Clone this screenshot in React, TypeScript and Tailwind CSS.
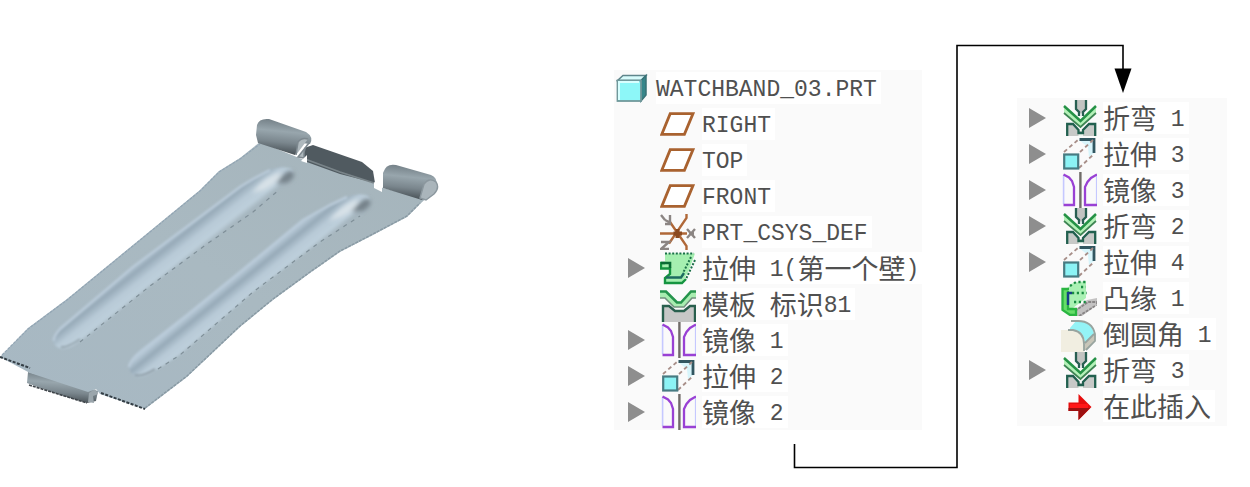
import React from "react";

type IconName =
  | "plane"
  | "csys"
  | "wall"
  | "mold"
  | "mirror"
  | "extrude"
  | "bend"
  | "flange"
  | "round"
  | "insert";

type Feature = { label: string; icon: IconName; expandable?: boolean };

const leftFeatures: Feature[] = [
  { label: "RIGHT", icon: "plane" },
  { label: "TOP", icon: "plane" },
  { label: "FRONT", icon: "plane" },
  { label: "PRT_CSYS_DEF", icon: "csys" },
  { label: "拉伸 1(第一个壁)", icon: "wall", expandable: true },
  { label: "模板 标识81", icon: "mold" },
  { label: "镜像 1", icon: "mirror", expandable: true },
  { label: "拉伸 2", icon: "extrude", expandable: true },
  { label: "镜像 2", icon: "mirror", expandable: true },
];

const rightFeatures: Feature[] = [
  { label: "折弯 1", icon: "bend", expandable: true },
  { label: "拉伸 3", icon: "extrude", expandable: true },
  { label: "镜像 3", icon: "mirror", expandable: true },
  { label: "折弯 2", icon: "bend", expandable: true },
  { label: "拉伸 4", icon: "extrude", expandable: true },
  { label: "凸缘 1", icon: "flange" },
  { label: "倒圆角 1", icon: "round" },
  { label: "折弯 3", icon: "bend", expandable: true },
  { label: "在此插入", icon: "insert" },
];

const drawings: Record<IconName, React.ReactNode> = {
  plane: (
    <path d="M1.8 28.3 10.2 7.6H33L24.4 28.3Z" fill="#fff" stroke="#a9622f" strokeWidth="2.8" />
  ),
  csys: (
    <g fill="none" strokeWidth="2.4">
      <path d="M0 19.5H27M26.5 0V4L9 29.5M10 8 26.5 32V36" stroke="#b06838" />
      <path d="M13.5 19.5H22M17.5 15V24" stroke="#8c4a20" strokeWidth="4" />
      <g stroke="#8b8583" strokeWidth="2.4">
        <path d="M1 1 5 6M10 1V10H5M5 6 9 8" />
        <path d="M27 15 35 24M35 15 27 24M29 19.5H34" />
        <path d="M1 28H9L1 35H9" />
      </g>
    </g>
  ),
  wall: (
    <g>
      <path d="M5 3.5H35L29 20 22 33H5V27L10 23V18.5H0V13H5Z" fill="#a5efb0" />
      <path d="M5 13H1V18.5H10V24L5 28V33H22L26 29" fill="none" stroke="#159440" strokeWidth="2.4" />
      <path d="M1 13H10V18" fill="none" stroke="#0b6b35" strokeWidth="2.6" />
      <path d="M6 27.5H21L24 23" fill="none" stroke="#1d6b60" strokeWidth="2.4" />
      <path d="M5 3.5H34M31 7 23 23M35 10 26 29" fill="none" stroke="#1a7048" strokeWidth="2" strokeDasharray="2 1.6" />
    </g>
  ),
  mold: (
    <g>
      <path d="M3 19H9L15 25H24L30 19H35V36H3Z" fill="#c6c7c6" />
      <path d="M3 36V20H9L15 25H24L30 20H35V36" fill="none" stroke="#285f4d" strokeWidth="2.4" />
      <path d="M0 5H6L17 16H21L31 5H36V12H32L23 21H14L5 12H0Z" fill="#a8edb0" />
      <path d="M0 5.5H6L17 16.5H21L31 5.5H36" fill="none" stroke="#25944c" strokeWidth="2.6" />
      <path d="M0 12H5L14 21H24L32 12H36" fill="none" stroke="#71917e" strokeWidth="1.6" />
    </g>
  ),
  mirror: (
    <g fill="none">
      <path d="M2.6 3V32M35.7 3V32" stroke="#c5c8ff" strokeWidth="1.6" />
      <path d="M2.5 2.5 8 5.5 11 9 13 15V33H2.5M36 2.5 30 6 26.5 10 24 15V33H36" stroke="#9941d4" strokeWidth="2.3" />
      <path d="M19.4 0V36" stroke="#706c68" strokeWidth="2.4" />
    </g>
  ),
  extrude: (
    <g>
      <path d="M18 4H33V17L28 21 27 11Z" fill="#d8f5fb" />
      <path d="M18.5 3.5H33V17" fill="none" stroke="#315660" strokeWidth="2.8" />
      <path d="M3 16 18 3M19 16 32 4M18 32 33 18" stroke="#a78e88" strokeWidth="1.8" strokeDasharray="4 3" />
      <rect x="3.2" y="18.5" width="14" height="14" fill="#8cf3f5" stroke="#477b82" strokeWidth="2.2" />
    </g>
  ),
  bend: (
    <g>
      <path d="M6 36V24H12L19 31 21 31 28 24H34V36Z" fill="#c7c9c7" />
      <path d="M17.500 36V32H22V36Z" fill="#eef6ef" />
      <path d="M6.2 36V24H12L17.5 30V33H22V30L28 24H34.2V36" fill="none" stroke="#22604f" strokeWidth="2.3" />
      <path d="M15 0H25V8L20 14 15 8Z" fill="#c2c4c2" />
      <path d="M15 0V9L18 12V16M25 0V9L22 12V16" fill="none" stroke="#285f52" strokeWidth="2.3" />
      <path d="M3 6 19.5 21 35 6V13L19.5 27 3 13Z" fill="#b4f1b8" />
      <path d="M3 6 19.5 21 35 6" fill="none" stroke="#259246" strokeWidth="2.5" />
      <path d="M3 13 19.5 27 35 13" fill="none" stroke="#3f8554" strokeWidth="1.7" />
    </g>
  ),
  flange: (
    <g>
      <path d="M13 31 26 20 36 18V25L21 36H13Z" fill="#c3c2c2" />
      <path d="M14 31 27 22H36V26M18 36 34 26" fill="none" stroke="#888586" strokeWidth="1.8" strokeDasharray="3 1" />
      <path d="M5 9 12 3 25 1V18L12 28V34L6 32Z" fill="#aaf1b4" />
      <path d="M9 6 15 2H25M11 13H26M13 22H25M20 7H25" fill="none" stroke="#198c42" strokeWidth="2.3" strokeDasharray="2.2 2.6" />
      <path d="M8 9H1.5V30L9 35H15V29H7V11" fill="#66dd68" stroke="#2ab541" strokeWidth="2.3" />
      <path d="M7 12V25M7 13H11" stroke="#173f86" strokeWidth="2.4" />
    </g>
  ),
  round: (
    <g>
      <path d="M0 14H13Q23 17 23 28V36H0Z" fill="#f1eee1" />
      <path d="M23 28 34 18V24L25 34H23Z" fill="#c8c6b9" />
      <path d="M9 12 15 5Q30 4 33 18L24 27Q23 13 9 14Z" fill="#94f3f6" />
      <path d="M7 14H12Q23 16 23 28V35M10 5H17Q31 5 34 18V25L25 34M24 27 33 18" fill="none" stroke="#98a49f" strokeWidth="1.8" />
    </g>
  ),
  insert: (
    <g>
      <path d="M7.5 14.5H17.5V6L30.5 19 17.5 32V23H7.5Z" fill="#e60d0d" />
      <path d="M7.5 20H29L17.5 32V23H7.5Z" fill="#9c1010" />
      <path d="M9 18H27" stroke="#ff1717" strokeWidth="4" />
    </g>
  ),
};

function FeatureIcon({ name }: { name: IconName }) {
  return (
    <svg viewBox="0 0 36 36" className="h-9 w-9 shrink-0" aria-hidden="true">
      {drawings[name]}
    </svg>
  );
}

/* Han characters are set larger than the Latin ones beside them. */
function Label({ text }: { text: string }) {
  const parts = text.match(/[\u4e00-\u9fff]+|[^\u4e00-\u9fff]+/g) ?? [];
  return (
    <span className="flex h-8 items-center bg-white pr-1 whitespace-pre text-[#505050]">
      {parts.map((part, i) =>
        /[\u4e00-\u9fff]/.test(part) ? (
          <span key={i} className="font-['Noto_Sans_CJK_SC',sans-serif] text-[27px] leading-8">
            {part}
          </span>
        ) : (
          <span key={i} className="pt-1 font-['Liberation_Mono',monospace] text-[23px] leading-8">
            {part}
          </span>
        ),
      )}
    </span>
  );
}

function FeatureRow({ feature }: { feature: Feature }) {
  return (
    <li className="flex h-9 items-center">
      <span className="flex w-11 shrink-0 pl-3">
        {feature.expandable && (
          <button type="button" aria-label={`展开 ${feature.label}`}>
            <svg viewBox="0 0 17 22" className="h-[22px] w-[17px]" aria-hidden="true">
              <path d="M0 1 17 11 0 21Z" fill="#8e8e8e" />
            </svg>
          </button>
        )}
      </span>
      <FeatureIcon name={feature.icon} />
      <span className="pl-1.5">
        <Label text={feature.label} />
      </span>
    </li>
  );
}

function Connector() {
  return (
    <svg
      viewBox="0 0 613 430"
      className="pointer-events-none col-start-1 row-start-1 h-[430px] w-[613px]"
      aria-hidden="true"
    >
      <path d="M180.5 404V427.5H343V5.5H509V32" fill="none" stroke="#000" strokeWidth="1.6" />
      <path d="M500.5 28.5H517.5L509 53Z" fill="#000" />
    </svg>
  );
}

function Watchband() {
  return (
    <svg viewBox="0 0 440 310" className="h-[310px] w-[440px]" role="img" aria-label="WATCHBAND_03">
      <defs>
        <linearGradient id="tube" gradientUnits="objectBoundingBox" x1="0.55" y1="0" x2="0.4" y2="1">
          <stop offset="0" stopColor="#6f7b82" />
          <stop offset="0.35" stopColor="#98a6ad" />
          <stop offset="0.65" stopColor="#7a868d" />
          <stop offset="1" stopColor="#41494e" />
        </linearGradient>
        <linearGradient id="body" x1="0" y1="1" x2="1" y2="0">
          <stop offset="0" stopColor="#a7b8c3" />
          <stop offset="0.5" stopColor="#a9b9c1" />
          <stop offset="1" stopColor="#a5b4bb" />
        </linearGradient>
        <linearGradient id="grooveA" gradientUnits="userSpaceOnUse" x1="145" y1="255" x2="164" y2="279">
          <stop offset="0" stopColor="#b8cad8" />
          <stop offset="0.25" stopColor="#97aab8" />
          <stop offset="0.55" stopColor="#b8cad7" />
          <stop offset="0.82" stopColor="#bdcfdb" />
          <stop offset="1" stopColor="#a6b6bf" />
        </linearGradient>
        <linearGradient id="grooveB" gradientUnits="userSpaceOnUse" x1="235" y1="277" x2="253" y2="299">
          <stop offset="0" stopColor="#b8cad8" />
          <stop offset="0.25" stopColor="#97aab8" />
          <stop offset="0.55" stopColor="#b8cad7" />
          <stop offset="0.82" stopColor="#bdcfdb" />
          <stop offset="1" stopColor="#a6b6bf" />
        </linearGradient>
        <filter id="soft" x="-5%" y="-5%" width="110%" height="110%">
          <feGaussianBlur stdDeviation="1.2" />
        </filter>
        <filter id="softer" x="-10%" y="-10%" width="120%" height="120%">
          <feGaussianBlur stdDeviation="2.2" />
        </filter>
      </defs>
      <g transform="translate(0 -110)">
        <path d="M28 372 27 383Q55 394 87 403L96 401 98 391Z" fill="url(#tube)" />
        <path d="M29 385 87 403" fill="none" stroke="#3f454a" strokeWidth="1.6" strokeDasharray="3 1" />
        <path d="M88 402 89 393 95 389 98 394 93 396 94 403Z" fill="#9ba6ac" />
        <path d="M0 357 28 328 67 299 150 231 200 190 219 171 240 158 260 142 304 160 373 183 383 188 418 197 434 191 420 204 407 217 373 235 340 252 310 273 273 300 240 327 187 377 145 409 100 394 96 389 88 392 30 373Z" fill="url(#body)" />
        <path d="M0 357 30 368M101 393 145 409" fill="none" stroke="#333d44" strokeWidth="2" strokeDasharray="3 1.5" />
        <path d="M145 408 187 376 240 326 273 299 310 272 340 251 373 234 407 216 420 203" fill="none" stroke="#899aa4" strokeWidth="1.5" strokeDasharray="3 1" />
        <path d="M2 355 28 329 67 300 150 232 200 191 219 172 240 159 260 144" fill="none" stroke="#92a5b4" strokeWidth="1.2" strokeDasharray="3 1" />
        <g filter="url(#soft)">
          <path d="M53 342Q52 337 60 329L133 267 240 187 253 179 269 170Q284 165 292 169 297 174 290 181L280 189 253 212 207 244 150 286 87 337 73 346Q58 353 53 342Z" fill="url(#grooveA)" />
          <path d="M129 367Q130 360 141 351L187 315 240 272 303 220 330 205 347 197Q361 192 368 196 374 201 368 208L360 216 320 242 253 292 180 355 151 373Q132 383 129 367Z" fill="url(#grooveB)" />
          <path d="M54 341Q53 337 60 329L133 267 240 187 253 179 270 170M129 367Q130 360 141 351L187 315 240 272 303 220 330 205 347 197" fill="none" stroke="#bacbd9" strokeWidth="2.5" />
          <path d="M61 347Q67 348 80 339M135 375Q142 377 155 369" fill="none" stroke="#87959d" strokeWidth="1.5" />
        </g>
        <g filter="url(#softer)">
          <path d="M276 184Q286 169 292 171 298 176 287 183ZM351 212Q363 197 369 199 374 204 363 211Z" fill="#76828a" />
          <path d="M252 193Q266 175 281 172 280 182 264 190ZM329 221Q344 202 359 199 356 211 341 217Z" fill="#d8e2e8" />
        </g>
        <path d="M80 342 150 286 207 244 253 212 280 189M158 369 180 355 253 292 320 242 360 216" fill="none" stroke="#7f8f98" strokeWidth="1.2" strokeDasharray="4 5" />
        <path d="M304 148 313 145 362 162 373 171 375 183 340 174 304 161Z" fill="#505a60" />
        <path d="M305 159 340 172 374 183" fill="none" stroke="#798489" strokeWidth="1.8" />
        <path d="M257 125Q259 118 269 119L306 132Q314 137 310 144L302 143 295 155 258 143 256 135Z" fill="url(#tube)" />
        <path d="M296 155 298 142Q302 137 308 139M309 143Q303 148 304 158L298 157Z" fill="#aeb8bd" stroke="#7d888f" strokeWidth="1.5" />
        <path d="M301 161 307 155 307 163Z" fill="#fff" />
        <path d="M383 173Q386 163 396 165L431 175Q438 178 436 185L422 200 383 188Z" fill="url(#tube)" />
        <path d="M420 198 424 184Q429 177 436 182 440 188 434 194L426 200Z" fill="#aab5bb" stroke="#8b979e" strokeWidth="1.4" />
        <path d="M374 182 382 187 382 192 374 188Z" fill="#fff" />
      </g>
    </svg>
  );
}

export default function App() {
  return (
    <main className="flex items-start bg-white pt-10 pr-[23px]">
      <figure className="flex-1 pt-[70px]">
        <Watchband />
      </figure>
      <section className="grid shrink-0" aria-label="模型树">
        <div className="col-start-1 row-start-1 flex items-start justify-between">
          <div className="mt-[30px] w-[308px] bg-[#fafafa] pl-0.5">
            <div className="flex h-9 items-center gap-2">
              <svg viewBox="0 0 32 36" className="h-9 w-8 shrink-0" aria-hidden="true">
                <path d="M1.5 10.5 7 5.5H30L25 10.5Z" fill="#d7fbfb" stroke="#5f858b" strokeWidth="1.5" />
                <path d="M25 10.5 30 5.5V25L25 31Z" fill="#36868a" stroke="#397276" strokeWidth="1.5" />
                <rect x="1.5" y="10.5" width="23.5" height="20.5" fill="#8df7f8" stroke="#70989b" strokeWidth="1.8" />
                <path d="M3 30V12H23" fill="none" stroke="#d8ffff" strokeWidth="2" />
              </svg>
              <Label text="WATCHBAND_03.PRT" />
            </div>
            <ul>
              {leftFeatures.map((feature) => (
                <FeatureRow key={feature.label} feature={feature} />
              ))}
            </ul>
          </div>
          <ul className="mt-[58px] w-[210px] bg-[#fafafa] py-0.5">
            {rightFeatures.map((feature) => (
              <FeatureRow key={feature.label} feature={feature} />
            ))}
          </ul>
        </div>
        <Connector />
      </section>
    </main>
  );
}
